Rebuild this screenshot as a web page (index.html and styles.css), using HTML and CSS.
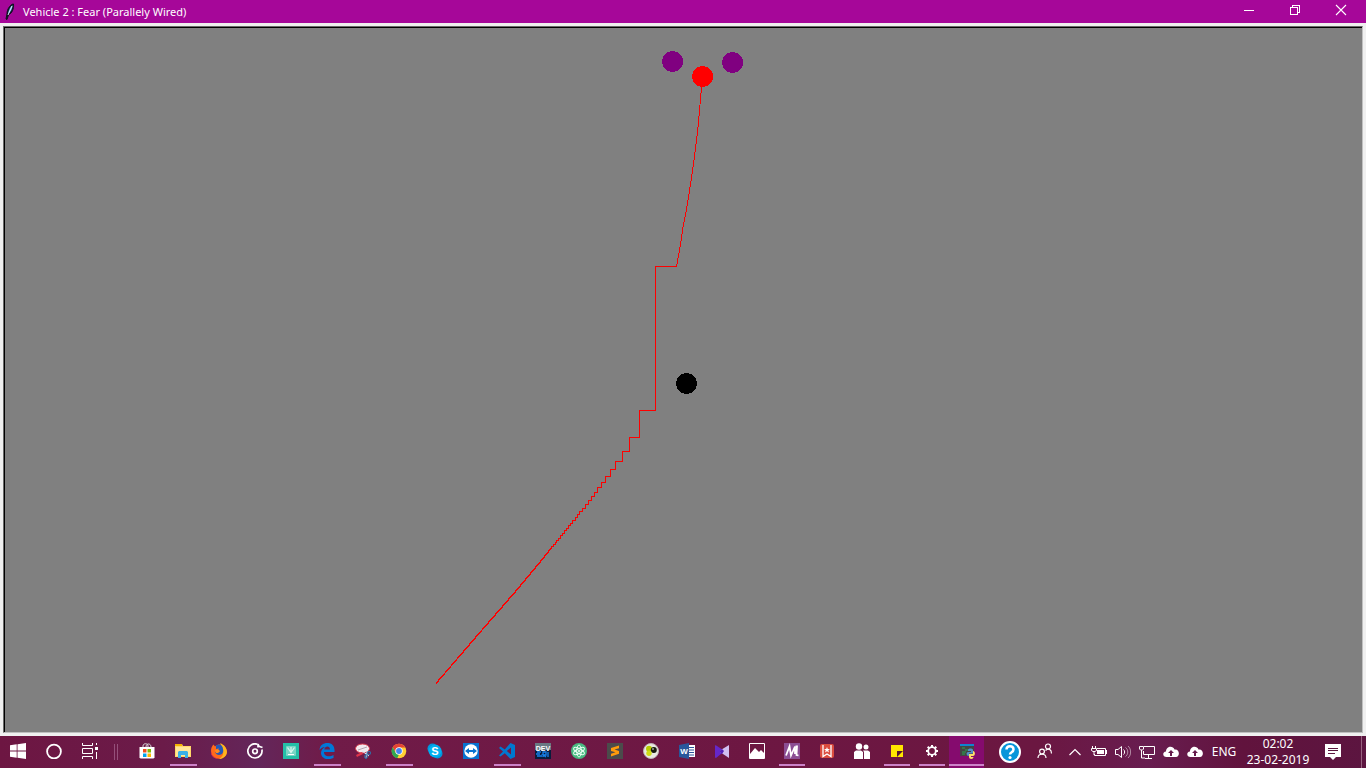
FILE: index.html
```html
<!DOCTYPE html>
<html lang="en">
<head>
<meta charset="utf-8">
<title>Vehicle 2 : Fear (Parallely Wired)</title>
<link rel="stylesheet" href="styles.css">
</head>
<body>
<header class="titlebar">
  <svg class="feather" width="10" height="18" viewBox="0 0 10 18"><path d="M8 1C5 2 2 6 2 11L1 16l1 .5L3.500 12C7 10 9 6 8.500 1z" fill="#101420" stroke="#101420"/><path d="M7.500 2C5 4 3.500 7 3 11 6 9 7.500 6 7.500 2z" fill="#5b9be0"/><path d="M7 3L3 12" stroke="#dce9f7"/></svg>
  <h1 class="title">Vehicle 2 : Fear (Parallely Wired)</h1>
  <div class="controls">
    <button class="control" aria-label="Minimize"><svg width="12" height="12" viewBox="0 0 12 12"><path d="M1 6.500h10" stroke="#fff" shape-rendering="crispEdges"/></svg></button>
    <button class="control" aria-label="Restore"><svg width="12" height="12" viewBox="0 0 12 12" fill="none" stroke="#fff" shape-rendering="crispEdges"><path d="M1.500 3.500h7v7h-7zM3.500 3V1.500h7v7H9"/></svg></button>
    <button class="control" aria-label="Close"><svg width="12" height="12" viewBox="0 0 12 12"><path d="M1 1l10 10M11 1L1 11" stroke="#fff" stroke-width="1.100"/></svg></button>
  </div>
</header>
<main class="frame">
  <div class="canvas">
    <svg class="drawing" role="img" aria-label="Vehicle trail around a light source">
      <g transform="translate(-5 -28)" shape-rendering="crispEdges">
        <path class="trail" d="M702.500 80.500L701.500 87.500 699.500 110.500 697.500 132.500 693.500 163.500 690 187.500 686.500 209.500 683 227.500 680 247.500 676.500 266.500H655.500V410.500H639.500V437.500H629.500V451.500H622.500V461.500H615.500V469.500H610.500V476.500H605.500V482.500H601.500V487.500H597.500V492.500H594.500V496.500H591.500V500.500H588.500V504.500H585.500V508.500H582.500V511.500H579.500V514.500H577.500V517.500H575.500V520.500H572.500V523.500H570.500V525.500H568.500V528.500H566.500V530.500H564.500V533.500H562.500V535.500H560.500V538.500H558.500V540.500H556.500V542.500H555.500V544.500H553.500V546.500H551.500V548.500H550.500"/>
        <path class="trail early" d="M551 548.500L540.500 561.500 515.500 591.500 475.500 637.500 436 683.500"/>
        <circle cx="672.600" cy="61.500" r="10.500" fill="#800080"/>
        <circle cx="732.600" cy="62.500" r="10.500" fill="#800080"/>
        <circle cx="702.600" cy="76.500" r="10.500" fill="#f00"/>
        <circle cx="686.500" cy="383.500" r="10.500" fill="#000"/>
      </g>
    </svg>
  </div>
</main>
<footer class="taskbar">
  <div class="group system">
    <button class="item" aria-label="Start"><svg class="icon" viewBox="0 0 16 16" fill="#fff"><path d="M0 2.300L6.700 1.300V7.600H0zM7.500 1.200L16 0v7.600H7.500zM0 8.400h6.700v6.300L0 13.700zM7.500 8.400H16V16l-8.500-1.200z"/></svg></button>
    <button class="item" aria-label="Cortana"><svg class="icon" viewBox="0 0 16 16"><circle cx="8" cy="8.500" r="6.900" fill="none" stroke="#fff" stroke-width="1.800"/></svg></button>
    <button class="item" aria-label="Task view"><svg class="icon" viewBox="0 0 16 16" fill="none" stroke="#fff"><path d="M.5 0v2.500h10V0M.5 5.500h10v5H.5zM.5 16v-2.500h10V16M14.500 0v2M14.500 9v7"/><path d="M13 4h3v3h-3z" fill="#fff" stroke="none"/></svg></button>
  </div>
  <span class="divider"></span>
  <nav class="group apps" aria-label="Applications">
    <button class="item" aria-label="Store"><svg class="icon" viewBox="0 0 16 16"><path d="M4 5V3c0-3 5-3 5 0v2M7 4c0-4 5-4 5 0" fill="none" stroke="#ddd"/><path d="M.5 4h15v10.500l-1 1h-13l-1-1z" fill="#fff"/><path d="M4 6h3.500v3.500H4z" fill="#f04e1f"/><path d="M8.500 6H12v3.500H8.500z" fill="#7db900"/><path d="M4 10.500h3.500V14H4z" fill="#00a3ee"/><path d="M8.500 10.500H12V14H8.500z" fill="#ffb800"/></svg></button>
    <button class="item running" aria-label="File Explorer"><svg class="icon" viewBox="0 0 16 16"><path d="M0 1h7l1 2h8v11H0z" fill="#ffd968"/><path d="M0 1h7v2H0z" fill="#f5b301"/><path d="M1 4h14v9H1z" fill="#ffe69a"/><path d="M3 15V9l1-1h8l1 1v6h-3v-3H6v3z" fill="#3ab0e8"/></svg></button>
    <button class="item" aria-label="Firefox"><svg class="icon" viewBox="0 0 16 16"><path d="M0 8C0 5 1 3 2.500 1.500L4 3.500C9-1 16 3 16 9c-1 9-16 9-16-1z" fill="#ff6a1a"/><path d="M9 .3c5 1.500 7.500 6 6.800 9.700C15 14 11 16 8 16c6-4 5-9 1-15.700z" fill="#ffb51c"/><path d="M0 7c0 6 4 8 8 9-6 0-9-4-8-9z" fill="#ed2c4b"/><path d="M5 2.500C8 0 12 2 12 6c1 3-1 6-4 6-2 0-3-1-4-3l3 .5 2-1.500-2-.5 1-2-3 .5z" fill="#2459b7"/><path d="M4 7l3-.5L9 8l-2 2H5z" fill="#ff8b21"/></svg></button>
    <button class="item" aria-label="Groove Music"><svg class="icon" viewBox="0 0 16 16" fill="none" stroke="#fff" stroke-width="1.700"><path d="M10.500 1.300A7.100 7.100 0 1 0 14.900 6.500"/><circle cx="8" cy="8.300" r="2.300"/><path d="M11 4.500V1l1 2.300 3.500 1.200"/></svg></button>
    <button class="item" aria-label="Filmora"><svg class="icon" viewBox="0 0 16 16"><path d="M0 0h16v16H0z" fill="#24bfa8"/><rect x="3" y="3" width="10" height="10" rx="1" fill="#78d5c5"/><path d="M4.500 4.500L8 9.500l3.500-5M8 4v6" fill="none" stroke="#d9f8f1" stroke-width="1.200"/><path d="M5 11.500h6" stroke="#fff"/></svg></button>
    <button class="item running" aria-label="Edge"><svg class="icon" viewBox="0 0 16 16"><path d="M.5 7C1 2 4 0 8.500 0 13 0 16 3 15.500 9H5c0 5 6 5 9.500 3v3C8 18 2 15 2 10c0-3 2-5 4-6-2 0-4 1-5.500 3zM5.300 6.500H11C11 2.500 6 2.500 5.300 6.500z" fill="#0078d7"/></svg></button>
    <button class="item" aria-label="Snipping Tool"><svg class="icon" viewBox="0 0 16 16"><ellipse cx="7.500" cy="5.500" rx="7" ry="4.500" fill="#f2eaee" stroke="#d73a4a"/><path d="M3 7l9-3" stroke="#b4a4ad"/><path d="M1 12l6-3 1 2-6 3z" fill="#e0354a"/><path d="M7 8l7 5M11 15l1-7" stroke="#d7e4f1"/><ellipse cx="14" cy="10" rx="2" ry="1.400" fill="none" stroke="#277ab5"/><ellipse cx="11" cy="13.500" rx="1.300" ry="2" fill="none" stroke="#277ab5"/></svg></button>
    <button class="item running" aria-label="Chrome"><svg class="icon" viewBox="0 0 16 16"><circle cx="8" cy="8" r="7.300" fill="#ffcf33"/><path d="M1.700 4.200A7.300 7.300 0 0 1 14.300 4.500H8L5 10z" fill="#e54335"/><path d="M1.700 4.200l3.300 6 3 1.300-1.800 3.700A7.300 7.300 0 0 1 1.700 4.200z" fill="#30a852"/><circle cx="8" cy="8" r="3.700" fill="#fff"/><circle cx="8" cy="8" r="2.900" fill="#4285f4"/></svg></button>
    <button class="item" aria-label="Skype"><svg class="icon app-letter" viewBox="0 0 16 16"><circle cx="5.500" cy="5.500" r="5" fill="#0096dd"/><circle cx="10.500" cy="10.500" r="5" fill="#0096dd"/><circle cx="8" cy="8" r="6.500" fill="#00aff0"/><text x="8" y="12" font-size="11" text-anchor="middle" fill="#fff">S</text></svg></button>
    <button class="item" aria-label="TeamViewer"><svg class="icon" viewBox="0 0 16 16"><path d="M0 0h16v16H0z" fill="#0872d0"/><circle cx="8" cy="8" r="6.700" fill="#fff"/><path d="M2 8l4-3v2h4V5l4 3-4 3V9H6v2z" fill="#0872d0"/></svg></button>
    <button class="item running" aria-label="Visual Studio Code"><svg class="icon" viewBox="0 0 16 16"><path d="M11.500 0L16 2v12l-4.500 2L5.800 10.300 1.500 13.500 0 12.500 4 8.500 0 5l1.500-1.500 4.300 3zM12 4.500L7.800 8l4.200 3.500z" fill="#0078d0" fill-rule="evenodd"/></svg></button>
    <button class="item" aria-label="Dev-R"><svg class="icon app-letter" viewBox="0 0 16 16"><path d="M0 0h16v16H0z" fill="#091c3c"/><path d="M0 0h16v7H0z" fill="#697982"/><text x="8" y="7.500" font-size="7" text-anchor="middle" fill="#fff">DEV</text><path d="M2 9h4M1 11h4M2 13h5M8 14V9h3v3H8l3 2M13 9v5" stroke="#1681ed" fill="none" stroke-width="1.300"/></svg></button>
    <button class="item" aria-label="Atom"><svg class="icon" viewBox="0 0 16 16"><circle cx="8" cy="8" r="8" fill="#48b980"/><g fill="none" stroke="#e8fff2"><ellipse cx="8" cy="8" rx="2.300" ry="6"/><ellipse cx="8" cy="8" rx="2.300" ry="6" transform="rotate(60 8 8)"/><ellipse cx="8" cy="8" rx="2.300" ry="6" transform="rotate(-60 8 8)"/></g><circle cx="8" cy="8" r="1" fill="#fff"/></svg></button>
    <button class="item" aria-label="Sublime Text"><svg class="icon" viewBox="0 0 16 16"><path d="M0 0h16v16H0z" fill="#4b4b4b"/><path d="M4 5l8-2.500v2.700L7.500 6.600 12 8v2.800L4 13.500v-2.700l4.500-1.500L4 8z" fill="#ff9b0b"/></svg></button>
    <button class="item" aria-label="Molecule viewer"><svg class="icon" viewBox="0 0 16 16"><circle cx="8" cy="8" r="7.500" fill="#e9e9e2" stroke="#bfb4b5"/><circle cx="6" cy="5.800" r="3" fill="#b6cc00"/><circle cx="10.800" cy="7" r="3" fill="#171b0c"/><circle cx="6" cy="10.300" r="2.700" fill="#d0dc16"/><circle cx="10" cy="6" r=".8" fill="#fff"/></svg></button>
  </nav>
  <nav class="group compact" aria-label="More applications">
    <button class="item" aria-label="Word"><svg class="icon app-letter" viewBox="0 0 16 16"><path d="M8 2h8v12H8z" fill="#fff"/><path d="M10 4.500h5M10 7h5M10 9.500h5M10 12h5" stroke="#29579b"/><path d="M0 2l10-2v16L0 14z" fill="#29579b"/><text x="5" y="11" font-size="8" text-anchor="middle" fill="#fff">W</text></svg></button>
    <button class="item" aria-label="Visual Studio"><svg class="icon" viewBox="0 0 16 16"><path d="M1.500 2L9 7l1 1.500L2 15l-1-.5v-12z" fill="#6527c9"/><path d="M15 2v13L6 9V7.500z" fill="#d1bff1"/><path d="M8 6l2 2-2 3-2-2V7.500z" fill="#5320b8"/></svg></button>
    <button class="item" aria-label="Photos"><svg class="icon" viewBox="0 0 16 16"><path d="M.5.5h15v15H.5z" fill="none" stroke="#fff"/><path d="M1 11l5-6 4 4 2-2 3 3v6H1z" fill="#fff"/></svg></button>
    <button class="item running" aria-label="MATLAB notes"><svg class="icon" viewBox="0 0 16 16"><path d="M0 0h16v16H0z" fill="#8b4d93"/><path d="M2 12.500L5.500 3.500 7 12.500 11 3.500V11M11.500 3.500L13 3.500 12.500 12l2 .5" fill="none" stroke="#fff" stroke-width="1.800"/></svg></button>
    <button class="item" aria-label="Wunderlist"><svg class="icon" viewBox="0 0 16 16"><rect x="1" y="1" width="14" height="14" rx="2" fill="#db4c3f"/><path d="M4 2v11.500l4-2.500 4 2.500V2" fill="none" stroke="#fff" stroke-width="1.300"/><path d="M8 4l.8 2H11L9.300 7.300 10 9.500 8 8.200 6 9.500l.7-2.200L5 6h2.200z" fill="#fff"/></svg></button>
    <button class="item" aria-label="People"><svg class="icon" viewBox="0 0 16 16" fill="#fff"><circle cx="5" cy="3.500" r="3.200"/><circle cx="12" cy="4" r="2.500"/><path d="M0 16V9l2-1.500h5L9 9v7zM9 7.500h5l2 1.500v7h-6V9z"/></svg></button>
    <button class="item running" aria-label="Sticky Notes"><svg class="icon" viewBox="0 0 16 16"><path d="M2 2h12v12H2z" fill="#ffe600"/><path d="M8 8h6l-6 6z" fill="#541432"/></svg></button>
    <button class="item running" aria-label="Settings"><svg class="icon" viewBox="0 0 16 16" fill="none" stroke="#fff"><circle cx="8" cy="8" r="3.800" stroke-width="1.800"/><path d="M8 2v2M8 12v2M2 8h2M12 8h2M3.700 3.700l1.500 1.500M10.800 10.800l1.500 1.500M3.700 12.300l1.500-1.500M10.800 5.200l1.500-1.500" stroke-width="2"/></svg></button>
    <button class="item running active" aria-label="Python"><svg class="icon" viewBox="0 0 16 16"><path d="M1 1h14v12H1z" fill="#444"/><path d="M1 1h14v2H1z" fill="#1083cf"/><path d="M3 5h3M6 7h3M3 9h4M3 11h3" stroke="#25a94e"/><path d="M9 7c0-2 5-2 5 0v3.500h-4V13c-3 0-3-4-1-4h3V8H9z" fill="#528fc9"/><path d="M14 8c2.500 0 2.500 5 0 5h-2v1h2.500c0 2.500-4.500 2.500-4.500 0v-3h4z" fill="#ffe068"/></svg></button>
  </nav>
  <button class="help" aria-label="Help"><svg class="help-icon" viewBox="0 0 22 22"><circle cx="11" cy="11" r="10" fill="#0795da" stroke="#fff" stroke-width="2"/><path d="M7.500 8.500c0-4.500 7-4.500 7 0 0 3-3.500 2.500-3.500 5" fill="none" stroke="#fff" stroke-width="2.500"/><circle cx="11" cy="16.500" r="1.600" fill="#fff"/></svg></button>
  <div class="tray">
    <button class="contacts" aria-label="Contacts"><svg class="icon" viewBox="0 0 16 16" fill="none" stroke="#fff" stroke-width="1.200"><circle cx="5" cy="8.500" r="2.400"/><path d="M1 15c0-5 8-5 8 0"/><circle cx="11" cy="3.500" r="2.500"/><path d="M8.500 7.500c3-3 6-1 6 3"/></svg></button>
    <button class="status" aria-label="Show hidden icons"><svg class="icon" viewBox="0 0 16 16"><path d="M2.500 11L8 5.500l5.500 5.500" fill="none" stroke="#fff" stroke-width="1.200"/></svg></button>
    <button class="status" aria-label="Battery"><svg class="icon" viewBox="0 0 16 16" fill="none" stroke="#fff"><path d="M6 4.500h8.500v7H3.500V10M15.500 6v4M.5 4.500h5v2L4 7.500H2L.5 6.500zM1.500 2v2M4.500 2v2M3 7v4"/><path d="M6 6h7v4H6z" fill="#fff" stroke="none"/></svg></button>
    <button class="status" aria-label="Volume"><svg class="icon" viewBox="0 0 16 16" fill="none" stroke="#fff"><path d="M.5 5.500H3l3.500-3v11l-3.500-3H.5z"/><path d="M8.500 5.500c1.500 1 1.500 4 0 5"/><path d="M10.500 3.500c3 2 3 7 0 9M13 2c3.500 3 3.500 9 0 12" opacity=".5"/></svg></button>
    <button class="status" aria-label="Network"><svg class="icon" viewBox="0 0 16 16" fill="none" stroke="#fff"><path d="M5 2.500h10.500v8h-11V7M9.500 11v3M6 14.500h7M.5 2.500h4V5l-1 1h-2l-1-1zM2.500 6v8H6"/></svg></button>
    <button class="status" aria-label="Cloud sync"><svg class="icon" viewBox="0 0 16 16"><path d="M3.500 13C-.5 13-1 8 3 7.500 3 2 10 1 11.500 5.500c5-1 6 7 1.500 7.500z" fill="#fff"/><path d="M8 6l3 3H9v3H7V9H5z" fill="#641a4b"/></svg></button>
    <button class="status" aria-label="Cloud backup"><svg class="icon" viewBox="0 0 16 16"><path d="M3.500 13C-.5 13-1 8 3 7.500 3 2 10 1 11.500 5.500c5-1 6 7 1.500 7.500z" fill="#fff"/><path d="M8 6l3 3H9v3H7V9H5z" fill="#641a4b"/></svg></button>
    <button class="language">ENG</button>
    <button class="clock"><span>02:02</span><span>23-02-2019</span></button>
    <button class="notifications" aria-label="Notifications"><svg class="icon" viewBox="0 0 16 16"><path d="M0 0h16v13h-5l-3 3-3-3H0z" fill="#fff"/><path d="M3 4.500h10M3 6.500h10M3 9.500h7" stroke="#5c173f"/></svg></button>
    <button class="desktop" aria-label="Show desktop"></button>
  </div>
</footer>
</body>
</html>
```
FILE: styles.css
```css
* { box-sizing: border-box; }
body {
  display: flex;
  flex-direction: column;
  height: 100vh;
  margin: 0;
  overflow: hidden;
  background: #f0f0f0;
  color: #fff;
  font: 12px/16px "Noto Sans", "Open Sans", sans-serif;
}
button {
  display: flex;
  align-items: center;
  justify-content: center;
  padding: 0;
  border: 0;
  background: none;
  color: inherit;
  font: inherit;
}
svg { display: block; flex: none; }
.titlebar {
  display: flex;
  align-items: center;
  height: 23px;
  padding-left: 5px;
  background: #a60799;
}
.title {
  flex: 1;
  margin: 0 0 0 8px;
  font-size: 11px;
  font-weight: 400;
}
.controls { display: flex; height: 100%; }
.control { width: 46px; padding-bottom: 3px; }
.frame {
  flex: 1;
  display: flex;
  min-height: 0;
  padding: 3px;
}
.controls { padding-right: 2px; }
.canvas {
  flex: 1;
  border: 1px solid;
  border-color: #696969 #c0c0c0 #c0c0c0 #696969;
}
.drawing {
  width: 100%;
  height: 100%;
  border-top: 1px solid #000;
  border-left: 1px solid #000;
  background: #808080;
}
.trail { fill: none; stroke: #f00; stroke-width: 1; }
.early { stroke-width: 1.4; }
.taskbar {
  display: flex;
  height: 32px;
  background: linear-gradient(90deg, #6d1642 0, #6b1b49 12%, #63265a 19%, #701b48 24%, #6d1742 55%, #6b1741 76%, #681d50 84%, #61133d 91%, #5c1540 100%);
}
.group { display: flex; }
.item {
  position: relative;
  width: 36px;
  padding-bottom: 2px;
}
.compact .item { width: 35px; }
.icon { width: 16px; height: 16px; }
.app-letter { font: 700 8px "Liberation Sans", sans-serif; }
.running::after {
  content: "";
  position: absolute;
  right: 4px;
  bottom: 2px;
  left: 5px;
  height: 2px;
  background: #cc82c8;
}
.active { background: #850b6e; }
.active::after { right: 0; left: 0; }
.divider {
  align-self: center;
  width: 4px;
  height: 16px;
  margin: 0 11px 0 6px;
  border: 1px solid #95507a;
  border-width: 0 1px;
}
.help { width: 44px; padding-left: 8px; }
.help-icon { width: 22px; height: 22px; }
.tray { display: flex; margin-left: auto; }
.contacts { width: 30px; padding-bottom: 2px; }
.contacts + .status { margin-left: 3px; }
.status { width: 24px; }
.language { width: 34px; }
.clock {
  flex-direction: column;
  width: 74px;
  font-size: 12px;
}
.notifications { width: 36px; }
.desktop {
  width: 5px;
  margin-left: 10px;
  border-left: 1px solid #97627f;
}
```
